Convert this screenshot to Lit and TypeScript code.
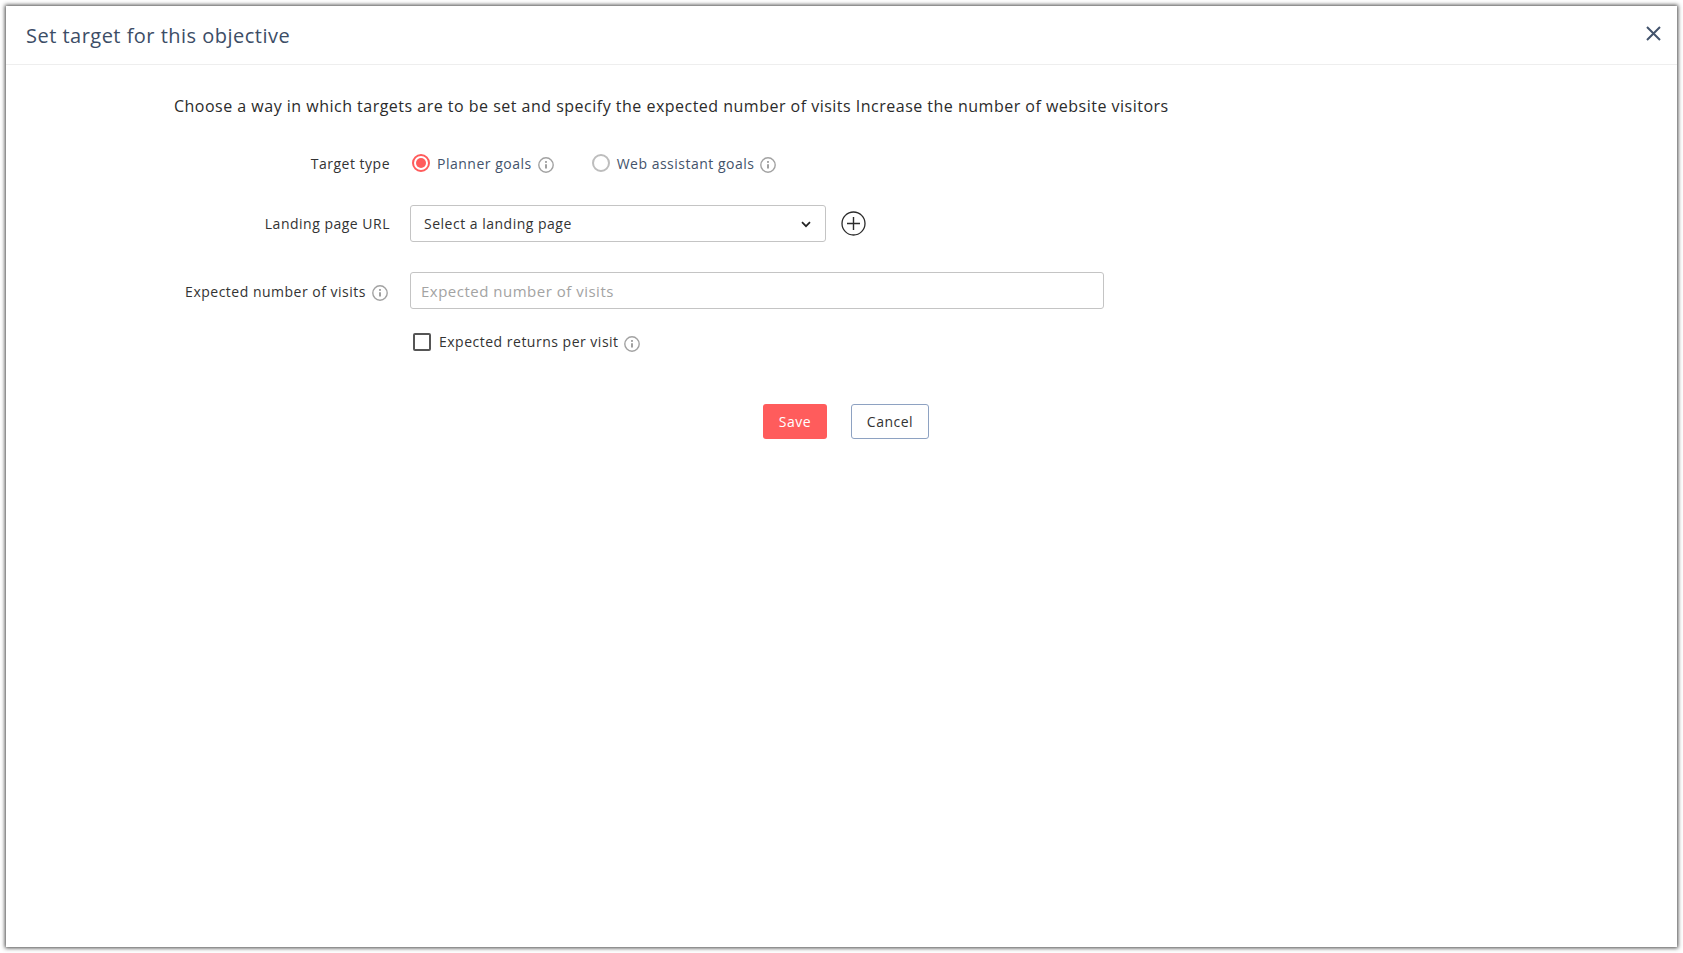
import { LitElement, html, css, svg } from "lit";
import { customElement } from "lit/decorators.js";

const info = html`<svg class="info" viewBox="0 0 16 16" width="16" height="16" fill="none">
  <circle cx="8" cy="8" r="7.2" stroke="#a2a2a2" stroke-width="1.4"></circle>
  <path d="M8 7.2V11.6" stroke="#808080" stroke-width="1.5"></path>
  <circle cx="8" cy="4.9" r="0.95" fill="#808080"></circle>
</svg>`;

@customElement("app-root")
export class AppRoot extends LitElement {
  static styles = css`
    :host {
      display: block;
      height: 953px;
      box-sizing: border-box;
      padding: 6px;
      background: #fff;
      font-family: "Open Sans", "Liberation Sans", sans-serif;
      color: #2b2b2b;
    }
    * { box-sizing: border-box; }
    .modal {
      height: 100%;
      background: #fff;
      box-shadow: 0 0 4px 1px rgba(50, 50, 50, 0.9);
      display: flex;
      flex-direction: column;
    }
    .head {
      height: 59px;
      flex: none;
      border-bottom: 1px solid #eeeeee;
      display: flex;
      align-items: center;
      justify-content: space-between;
      padding: 0 16px 0 20px;
    }
    h1 {
      margin: 0;
      font-size: 20px;
      font-weight: 400;
      letter-spacing: 0.48px;
      color: #3c4d66;
    }
    .close { display: block; margin-top: -4px; }
    .body { padding: 31px 0 0 168px; }
    .desc {
      margin: 0;
      font-size: 16px;
      line-height: 20px;
      letter-spacing: 0.49px;
      color: #2b2b2b;
    }
    .form {
      margin-top: 32px;
      display: grid;
      grid-template-columns: 216px 1fr;
      column-gap: 20px;
      align-items: center;
      font-size: 14px;
      letter-spacing: 0.5px;
    }
    .label {
      display: flex;
      justify-content: flex-end;
      align-items: center;
      gap: 6px;
      color: #333;
    }
    .radios { display: flex; align-items: center; height: 30px; }
    .radio { display: flex; align-items: center; color: #43536b; }
    .radio + .radio { margin-left: 36px; }
    .dot {
      width: 18px;
      height: 18px;
      border-radius: 50%;
      border: 2px solid #bdbdbd;
      margin-left: 2px;
      margin-right: 7px;
      display: flex;
      align-items: center;
      justify-content: center;
      background: #fff;
    }
    .dot.on { border-color: #ff5c5c; }
    .dot.on::after {
      content: "";
      width: 10px;
      height: 10px;
      border-radius: 50%;
      background: #ff5c5c;
    }
    .info { display: block; flex: none; }
    .radio .info { margin-left: 6px; margin-top: 3px; }
    .select-row {
      display: flex;
      align-items: center;
      gap: 15px;
      margin-top: 27px;
    }
    .select {
      width: 416px;
      height: 37px;
      border: 1px solid #c4c4c4;
      border-radius: 3px;
      padding: 0 14px 0 13px;
      display: flex;
      align-items: center;
      justify-content: space-between;
      color: #333;
    }
    .select svg { margin-top: 2px; }
    .l2 { margin-top: 27px; }
    .l3 { margin-top: 32px; padding-right: 2px; }
    .l3 .info { margin-top: 2px; }
    .input {
      margin-top: 30px;
      width: 694px;
      height: 37px;
      border: 1px solid #c4c4c4;
      border-radius: 3px;
      padding: 0 10px;
      display: flex;
      align-items: center;
      font-size: 15px;
      letter-spacing: 0.5px;
      color: #a3a3a3;
    }
    .check-row {
      grid-column: 2;
      margin-top: 22px;
      display: flex;
      align-items: center;
      color: #333;
    }
    .box {
      width: 18px;
      height: 18px;
      margin-left: 3px;
      margin-right: 8px;
      border: 2px solid #555;
      border-radius: 2px;
    }
    .check-row .info { margin-left: 5px; margin-top: 5px; }
    .actions {
      margin: 52px 0 0 589px;
      display: flex;
      gap: 24px;
    }
    .btn {
      height: 35px;
      border-radius: 3px;
      display: flex;
      align-items: center;
      justify-content: center;
      font-size: 14px;
      letter-spacing: 0.5px;
    }
    .save { width: 64px; background: #ff5c5c; color: #fff; }
    .cancel {
      width: 78px;
      background: #fff;
      border: 1px solid #8ea2c2;
      color: #333;
    }
  `;

  render() {
    return html`<div class="modal">
      <div class="head">
        <h1>Set target for this objective</h1>
        <svg class="close" width="15" height="15" viewBox="0 0 15 15" fill="none">
          ${svg`<path d="M1 1L14 14M14 1L1 14" stroke="#42536c" stroke-width="2"></path>`}
        </svg>
      </div>
      <div class="body">
        <p class="desc">Choose a way in which targets are to be set and specify the expected number of visits Increase the number of website visitors</p>
        <div class="form">
          <div class="label">Target type</div>
          <div class="radios">
            <div class="radio"><span class="dot on"></span>Planner goals${info}</div>
            <div class="radio"><span class="dot"></span>Web assistant goals${info}</div>
          </div>
          <div class="label l2">Landing page URL</div>
          <div class="select-row">
            <div class="select">
              Select a landing page
              <svg width="10" height="7" viewBox="0 0 10 7" fill="none">
                <path d="M1 1.2L5 5.2L9 1.2" stroke="#222" stroke-width="1.7"></path>
              </svg>
            </div>
            <svg width="25" height="25" viewBox="0 0 25 25" fill="none">
              <circle cx="12.5" cy="12.5" r="11.5" stroke="#2b2b2b" stroke-width="1.3"></circle>
              <path d="M12.5 6V19M6 12.5H19" stroke="#2b2b2b" stroke-width="1.4"></path>
            </svg>
          </div>
          <div class="label l3">Expected number of visits ${info}</div>
          <div class="input">Expected number of visits</div>
          <div class="check-row"><span class="box"></span>Expected returns per visit${info}</div>
        </div>
        <div class="actions">
          <div class="btn save">Save</div>
          <div class="btn cancel">Cancel</div>
        </div>
      </div>
    </div>`;
  }
}
